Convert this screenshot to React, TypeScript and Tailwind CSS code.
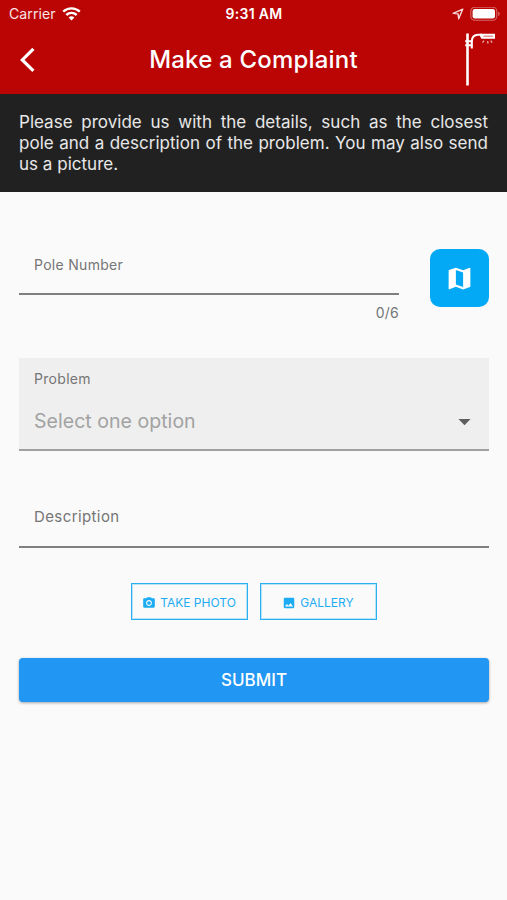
import React from 'react';
import { MdArrowDropDown, MdImage, MdMap, MdPhotoCamera } from 'react-icons/md';

const WifiIcon = () => (
  <svg width="19" height="15" viewBox="0 0 19 15" fill="none" stroke="#fff" strokeWidth="2.4">
    <path d="M1.2 4.700C5.900.200 13.100.200 17.800 4.700" />
    <path d="M4.300 8c3-2.800 7.400-2.800 10.400 0" />
    <path d="M9.500 13.500 6.600 10.600a4.200 4.200 0 0 1 5.800 0z" fill="#fff" stroke="none" />
  </svg>
);

const LocationIcon = () => (
  <svg width="12" height="12" viewBox="0 0 12 12" fill="none" stroke="#fff" strokeOpacity=".85" strokeWidth="1.4" strokeLinejoin="round">
    <path d="M10.8 1.1 1.2 5.4l4.9.5.6 4.9z" />
  </svg>
);

const BatteryIcon = () => (
  <svg width="31" height="15" viewBox="0 0 31 15">
    <rect x=".8" y=".3" width="26" height="13" rx="4" fill="none" stroke="#fff" strokeOpacity=".4" strokeWidth="1.1" />
    <rect x="2.6" y="2.1" width="22.4" height="9.4" rx="2.2" fill="#fff" />
    <path d="M28.3 4.700c1.800.700 1.800 3.500 0 4.200z" fill="#fff" fillOpacity=".5" />
  </svg>
);

const BackIcon = () => (
  <svg width="16" height="26" viewBox="0 0 16 26" fill="none" stroke="#fff" strokeWidth="3.2">
    <path d="M14.400 1.900 3.300 12.900l11.100 11" />
  </svg>
);

const LampIcon = () => (
  <svg width="32" height="54" viewBox="0 0 32 54" fill="none" stroke="#fff">
    <path d="M3.5.5v52" strokeWidth="2.6" />
    <path d="M7.800 15.600V8.400c0-4 2.300-6.700 6.200-6.700h4" strokeWidth="2.100" />
    <path d="M1.200 8.300h7M1.200 12.200h7" strokeWidth="1.900" />
    <path d="M15.800.700h15.200v5.100H17.400c-.600-1.500-1-2.200-1.600-2.900z" fill="#fff" stroke="none" />
    <path d="M19.500 3.200h9.300" stroke="#bb0404" strokeOpacity=".6" strokeWidth="1.100" />
    <path d="m20 7.700-1.500 2M23.700 8l.3 2.600M26.700 7.700l1.500 2" strokeWidth="1.200" strokeOpacity=".7" />
  </svg>
);

interface OutlineButtonProps {
  icon: React.ReactNode;
  label: string;
}

const OutlineButton: React.FC<OutlineButtonProps> = ({ icon, label }) => (
  <button className="w-[117px] h-[37px] border border-[#29b0f3] shadow-[inset_0_0_0_1px_rgba(41,176,243,0.3)] text-[#1cacf3] flex items-center justify-center gap-1 pt-0.5 pr-px text-[12px] whitespace-nowrap">
    {icon}
    <span>{label}</span>
  </button>
);

const Header = () => (
  <header className="h-[94px] bg-[#bb0404] text-white">
    <div className="h-7 grid grid-cols-3 items-center pl-[9px] pr-[6px] text-[14px]">
      <div className="flex items-center gap-1.5">
        <span className="leading-4 tracking-[0.1px] text-white/90">Carrier</span>
        <WifiIcon />
      </div>
      <span className="text-center font-semibold text-[14px] leading-4 pr-0.5 tracking-[0.3px]">9:31 AM</span>
      <div className="flex items-center justify-end gap-[6px]">
        <LocationIcon />
        <BatteryIcon />
      </div>
    </div>
    <div className="h-[64px] flex items-center justify-between pl-[19px] pr-[11px]">
      <button className="w-6 flex">
        <BackIcon />
      </button>
      <h1 className="text-[24px] font-medium tracking-[0.2px]">Make a Complaint</h1>
      <LampIcon />
    </div>
  </header>
);

export default function App() {
  return (
    <div className="w-[507px] h-[900px] overflow-hidden bg-[#fafafa] font-['Inter',sans-serif]">
      <Header />
      <p className="h-[98px] bg-[#212121] text-white/90 px-[19px] pt-[18px] text-[17px] leading-[20.800px] text-justify tracking-[0.02px]">
        Please provide us with the details, such as the closest pole and a description of the problem. You may also send us a picture.
      </p>

      <main className="pl-[19px] pr-[18px] pt-[57px]">
        <div className="flex items-start justify-between">
          <div className="w-[380px]">
            <div className="h-[46px] border-b-2 border-[#808080] pl-[15px] pt-[6px] text-[14px] leading-5 tracking-[0.3px] text-[#757575]">
              Pole Number
            </div>
            <div className="pt-[8px] text-right text-[14px] leading-5 tracking-[0.2px] text-[#757575]">0/6</div>
          </div>
          <button className="w-[59px] h-[58px] rounded-[10px] bg-[#03a9f4] flex items-center justify-center text-white">
            <MdMap size={29} />
          </button>
        </div>

        <div className="mt-[35px] h-[93px] bg-[#efefef] border-b-2 border-[#a0a0a0] pl-[15px] pr-[10px] pt-[11px]">
          <div className="text-[14px] leading-5 tracking-[0.3px] text-[#757575]">Problem</div>
          <div className="mt-[18px] flex items-center justify-between text-[#a2a2a2]">
            <span className="text-[19.500px] leading-7 pb-px tracking-[0.04px]">Select one option</span>
            <MdArrowDropDown size={29} className="text-[#5f5f5f]" />
          </div>
        </div>

        <div className="mt-[46px] h-[51px] border-b-2 border-[#808080] pl-[15px] pt-[10px] text-[15px] leading-5 tracking-[0.4px] text-[#757575]">
          Description
        </div>

        <div className="mt-[35px] flex justify-center gap-3">
          <OutlineButton icon={<MdPhotoCamera size={14} />} label="TAKE PHOTO" />
          <OutlineButton icon={<MdImage size={14} />} label="GALLERY" />
        </div>

        <button className="mt-[38px] w-full h-[44px] rounded-[4px] bg-[#2196f3] text-white text-[17px] font-medium pt-0.5 shadow-[0_1px_3px_rgba(0,0,0,0.35)]">
          SUBMIT
        </button>
      </main>
    </div>
  );
}
